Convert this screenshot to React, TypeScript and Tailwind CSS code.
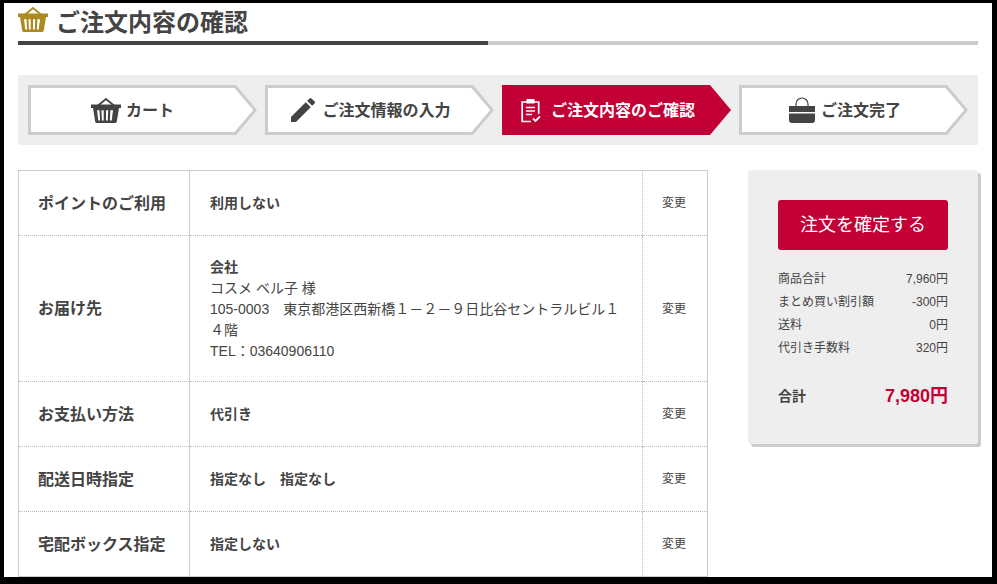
import React from 'react';
import { MdEdit } from 'react-icons/md';

function BasketIcon({ className }: { className?: string }) {
  return (
    <svg viewBox="0 0 30 25" className={className} fill="currentColor">
      <path d="M6.5 8 15 1 23.5 8" fill="none" stroke="currentColor" strokeWidth="1.8" />
      <rect x="0" y="6.5" width="30" height="3.5" />
      <path fillRule="evenodd" d="M2 10h26l-2.2 13.4a1.8 1.8 0 0 1-1.8 1.6H6a1.8 1.8 0 0 1-1.8-1.6L2 10ZM6 12.2l1.3 10.3h1.8l-.6-10.3H6Zm4.5 0 .4 10.3h1.8V12.2h-2.2Zm4.5 0v10.3h1.8l.4-10.3h-2.2Zm4.4 0-.5 10.3h1.8L22 12.2h-2.6Z" />
    </svg>
  );
}

function ClipboardIcon({ className }: { className?: string }) {
  return (
    <svg viewBox="0 0 20 25" className={className} fill="none" stroke="currentColor">
      <path d="M10 23.5H1.2V4h16.5v12" strokeWidth="1.7" />
      <rect x="5.5" y="1" width="8" height="4.5" fill="currentColor" stroke="none" />
      <path d="M5 9.5h9M5 13h9M5 16.5h6" strokeWidth="1.7" />
      <path d="M12 20.5l2.5 2.5 4.5-4.5" strokeWidth="1.8" />
    </svg>
  );
}

function BagIcon({ className }: { className?: string }) {
  return (
    <svg viewBox="0 0 26 26" className={className} fill="currentColor">
      <path d="M7 9V7a6 6 0 0 1 12 0v2" fill="none" stroke="currentColor" strokeWidth="1.2" />
      <path d="M0 9h26v6H0zM0 16.5h26V23a3 3 0 0 1-3 3H3a3 3 0 0 1-3-3z" />
    </svg>
  );
}

function Step({ icon, label, active }: { icon: React.ReactNode; label: string; active?: boolean }) {
  return (
    <div className={`w-[229px] h-[50px] [clip-path:polygon(0_0,208px_0,229px_25px,208px_50px,0_50px)] ${active ? 'bg-[#c30035]' : 'bg-[#cccccc]'}`}>
      <div
        className={`w-full h-full flex items-center justify-center gap-[5px] pr-[17px] text-[16px] font-bold ${
          active
            ? 'text-white'
            : 'text-[#444444] bg-white [clip-path:polygon(3px_3px,206.5px_3px,225.3px_25px,206.5px_47px,3px_47px)]'
        }`}
      >
        {icon}
        <span className="pt-[2px]">{label}</span>
      </div>
    </div>
  );
}

const rows = [
  { head: 'ポイントのご利用', value: '利用しない', h: 'h-[65px]' },
  { head: 'お届け先', value: null, h: 'h-[146px]' },
  { head: 'お支払い方法', value: '代引き', h: 'h-[65px]' },
  { head: '配送日時指定', value: '指定なし　指定なし', h: 'h-[65px]' },
  { head: '宅配ボックス指定', value: '指定しない', h: 'h-[65px]' },
];

const prices = [
  ['商品合計', '7,960円'],
  ['まとめ買い割引額', '-300円'],
  ['送料', '0円'],
  ['代引き手数料', '320円'],
];

export default function App() {
  return (
    <div className="w-[997px] h-[584px] bg-black pl-[4px] pt-[3px] pr-[5px] pb-[7px] overflow-hidden font-['Liberation_Sans','Noto_Sans_CJK_JP',sans-serif] text-[#444444]">
      <div className="w-full h-full bg-white overflow-hidden pl-[14px] pr-[14px]">
        {/* Title */}
        <div className="flex items-center gap-2 h-[38px] pb-[1px]">
          <BasketIcon className="w-[30px] h-[25px] mb-[4px] text-[#ad8a1f]" />
          <h1 className="pt-[2px] text-[24px] font-bold leading-none">ご注文内容の確認</h1>
        </div>
        <div className="h-[4px] bg-[#cccccc]">
          <div className="w-[470px] h-full bg-[#444444]" />
        </div>

        {/* Steps */}
        <div className="mt-[30px] h-[70px] bg-[#eeeeee] flex items-center gap-[8px] px-[10px]">
          <Step icon={<BasketIcon className="w-[30px] h-[25px] -ml-[3px]" />} label="カート" />
          <Step icon={<MdEdit className="w-[32px] h-[32px] -ml-[4px] -mr-[2px]" />} label="ご注文情報の入力" />
          <Step icon={<ClipboardIcon className="w-[20px] h-[25px] mr-[5px]" />} label="ご注文内容のご確認" active />
          <Step icon={<BagIcon className="w-[26px] h-[26px] mr-[1px]" />} label="ご注文完了" />
        </div>

        <div className="mt-[25px] flex justify-between items-start">
          {/* Order table */}
          <table className="w-[690px] table-fixed border-collapse border border-[#cccccc]">
            <tbody>
              {rows.map((row) => (
                <tr key={row.head} className={`${row.h} border-b border-dotted border-[#bbbbbb]`}>
                  <th className="w-[171px] pl-[19px] pt-[1px] text-left text-[16px] font-bold border-r border-[#cccccc]">{row.head}</th>
                  <td className={`pl-[20px] pr-[20px] text-[14px] leading-[21px] border-r border-dotted border-[#bbbbbb] ${row.value ? '' : 'pt-[2px]'}`}>
                    {row.value ? (
                      <span className="font-bold">{row.value}</span>
                    ) : (
                      <>
                        <div className="font-bold">会社</div>
                        <div>コスメ ベル子 様</div>
                        <div>105-0003　東京都港区西新橋１－２－９日比谷セントラルビル１４階</div>
                        <div>TEL：03640906110</div>
                      </>
                    )}
                  </td>
                  <td className="w-[65px] pr-[2px] text-center text-[12px]">変更</td>
                </tr>
              ))}
            </tbody>
          </table>

          {/* Summary card */}
          <div className="w-[230px] h-[274px] bg-[#eeeeee] rounded-[3px] shadow-[3px_3px_0_#cccccc] p-[30px]">
            <button className="w-[170px] h-[50px] rounded-[3px] bg-[#c30035] text-white text-[18px]">注文を確定する</button>
            <div className="mt-[18px] text-[12px] leading-[23px]">
              {prices.map(([label, price]) => (
                <div key={label} className="flex justify-between">
                  <span>{label}</span>
                  <span>{price}</span>
                </div>
              ))}
            </div>
            <div className="mt-[23px] flex justify-between items-center h-[26px]">
              <span className="text-[14px] font-bold">合計</span>
              <span className="pt-[1px] text-[18px] font-bold text-[#c30035]">7,980円</span>
            </div>
          </div>
        </div>
      </div>
    </div>
  );
}
